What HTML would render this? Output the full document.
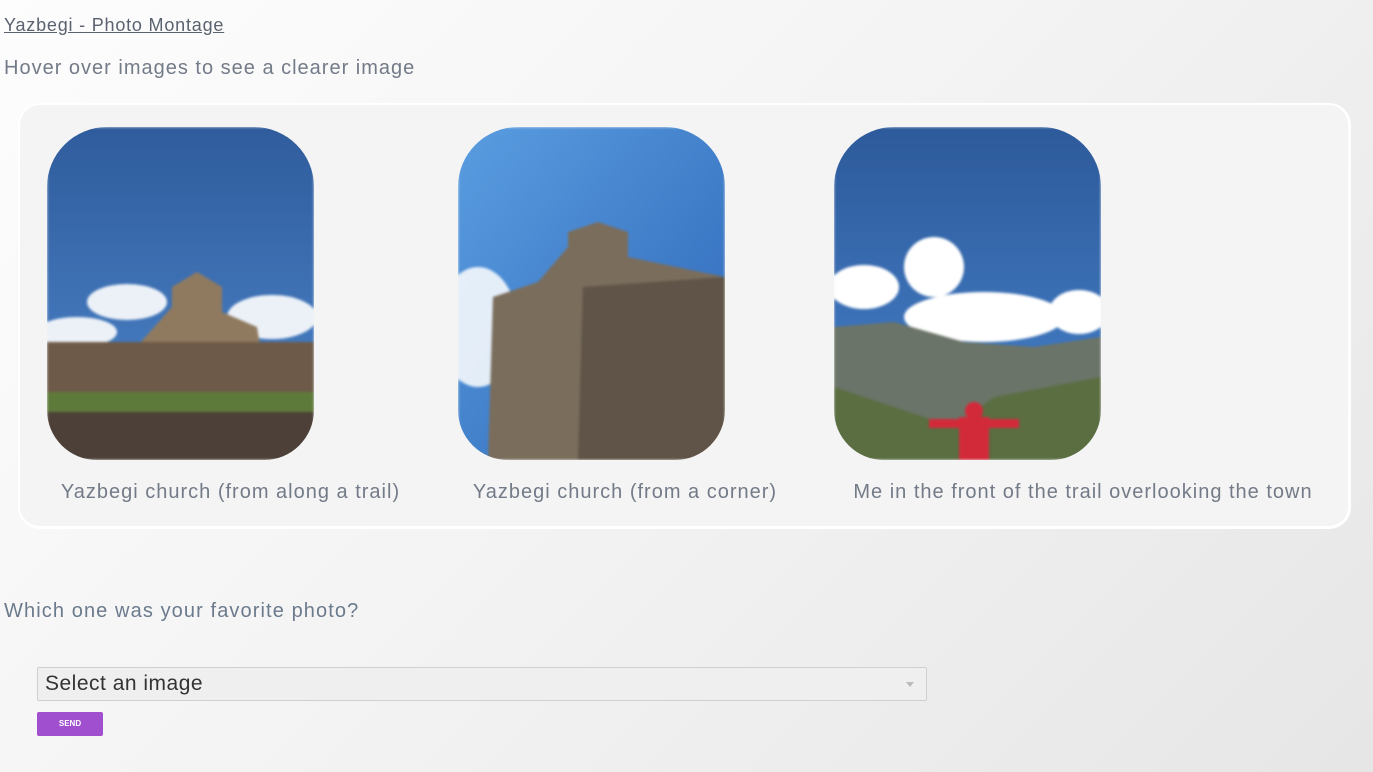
<!DOCTYPE html>
<html><head><meta charset="utf-8"><style>
body{margin:0;width:1373px;height:772px;overflow:hidden;font-family:"Liberation Sans",sans-serif;
background:linear-gradient(135deg,#fdfdfd 0%,#f4f4f4 45%,#e6e6e6 100%);position:relative;color:#6b7384}
a.t{position:absolute;left:4px;top:15px;font-size:18px;color:#5a6270;text-decoration:underline;letter-spacing:.8px}
.h{position:absolute;left:4px;top:57px;font-size:20px;color:#737b88;letter-spacing:1px}
.card{position:absolute;left:18px;top:103px;width:1328px;height:421px;background:#f4f4f4;border:2px solid #fff;border-right-width:3px;border-bottom-width:3px;border-radius:22px}
.img{position:absolute;top:127px;width:267px;height:333px;border-radius:60px 60px 50px 50px;overflow:hidden}
.img svg{display:block;filter:blur(1.2px)}
.cap{position:absolute;top:481px;font-size:20px;color:#737b88;white-space:nowrap;text-align:center;letter-spacing:1px}
.q{position:absolute;left:4px;top:600px;font-size:20px;color:#6b7a8c;letter-spacing:1.1px}
.sel{position:absolute;left:37px;top:667px;width:888px;height:32px;border:1px solid #d0d0d0;border-radius:2px;background:#efefef;font-size:21px;color:#333;line-height:32px;text-indent:7px;letter-spacing:.5px}
.sel:after{content:"";position:absolute;right:12px;top:14px;border:4px solid transparent;border-top:5px solid #bbb}
.btn{position:absolute;left:37px;top:712px;width:66px;height:24px;background:#a04fcf;border-radius:2px;color:#fff;font-size:8px;font-weight:bold;text-align:center;line-height:24px}
</style></head><body>
<a class="t">Yazbegi - Photo Montage</a>
<div class="h">Hover over images to see a clearer image</div>
<div class="card"></div>
<div class="img" style="left:47px"><svg width="267" height="333">
<defs><linearGradient id="s1" x1="0" y1="0" x2="0" y2="1"><stop offset="0" stop-color="#2f5c9c"/><stop offset="1" stop-color="#4d86cc"/></linearGradient></defs>
<rect width="267" height="333" fill="url(#s1)"/>
<ellipse cx="80" cy="175" rx="40" ry="18" fill="#fff" opacity=".9"/><ellipse cx="30" cy="205" rx="40" ry="15" fill="#fff" opacity=".9"/>
<ellipse cx="225" cy="190" rx="45" ry="22" fill="#fff" opacity=".9"/>
<polygon points="85,225 125,180 125,160 150,145 175,160 175,185 210,200 215,230" fill="#8f7a60"/>
<rect x="0" y="215" width="267" height="118" fill="#6e5a48"/><rect x="0" y="265" width="267" height="20" fill="#5e7a3a"/>
<rect x="0" y="285" width="267" height="48" fill="#4d4038"/></svg></div>
<div class="img" style="left:458px"><svg width="267" height="333">
<defs><linearGradient id="s2" x1="0" y1="0" x2="1" y2="1"><stop offset="0" stop-color="#5a9de0"/><stop offset="1" stop-color="#2d66b8"/></linearGradient></defs>
<rect width="267" height="333" fill="url(#s2)"/>
<ellipse cx="20" cy="200" rx="40" ry="60" fill="#fff" opacity=".85"/>
<polygon points="30,333 35,170 80,155 110,120 110,105 140,95 170,105 170,130 267,150 267,333" fill="#7a6d5c"/>
<polygon points="120,333 125,160 267,150 267,333" fill="#5f5447"/></svg></div>
<div class="img" style="left:834px"><svg width="267" height="333">
<defs><linearGradient id="s3" x1="0" y1="0" x2="0" y2="1"><stop offset="0" stop-color="#2d5a9a"/><stop offset="1" stop-color="#4682cc"/></linearGradient></defs>
<rect width="267" height="333" fill="url(#s3)"/>
<ellipse cx="100" cy="140" rx="30" ry="30" fill="#fff"/><ellipse cx="30" cy="160" rx="35" ry="22" fill="#fff"/><ellipse cx="150" cy="190" rx="80" ry="25" fill="#fff"/><ellipse cx="245" cy="185" rx="30" ry="22" fill="#fff"/>
<polygon points="0,200 60,195 130,215 200,220 267,210 267,333 0,333" fill="#6b7468"/>
<polygon points="0,260 120,300 160,270 267,250 267,333 0,333" fill="#5a6e42"/>
<rect x="125" y="290" width="30" height="43" fill="#d32a3a"/><rect x="95" y="292" width="90" height="9" fill="#d32a3a"/><circle cx="140" cy="284" r="9" fill="#d32a3a"/></svg></div>
<div class="cap" style="left:47px;width:367px">Yazbegi church (from along a trail)</div>
<div class="cap" style="left:450px;width:350px">Yazbegi church (from a corner)</div>
<div class="cap" style="left:840px;width:486px">Me in the front of the trail overlooking the town</div>
<div class="q">Which one was your favorite photo?</div>
<div class="sel">Select an image</div>
<div class="btn">SEND</div>
</body></html>
